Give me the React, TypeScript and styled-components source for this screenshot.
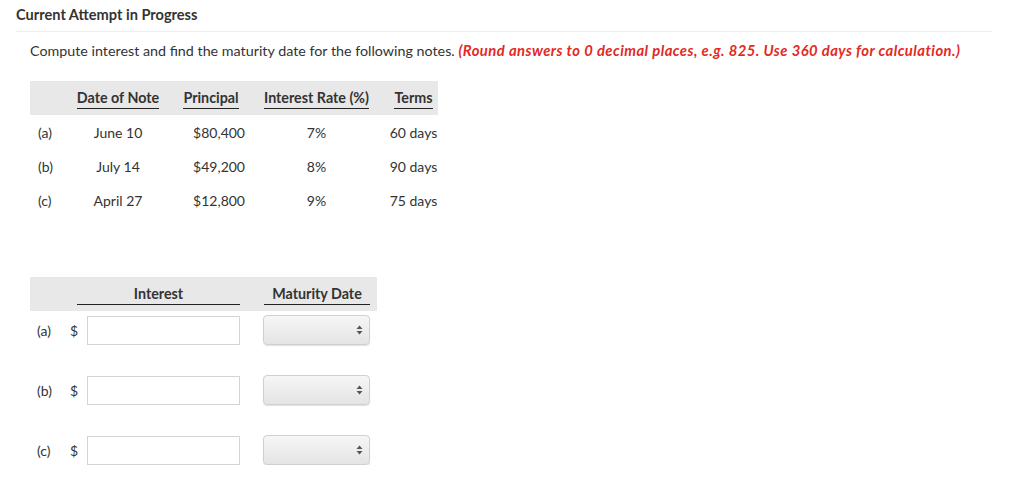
import styled, { createGlobalStyle } from "styled-components";

const GlobalStyle = createGlobalStyle`
  body {
    margin: 0;
    background: #fff;
    font-family: Lato, "Open Sans", sans-serif;
    color: #333;
  }
`;

const Page = styled.div`
  padding: 6px 32px 0 16px;
`;

const Heading = styled.h2`
  margin: 0;
  font-size: 14.6px;
  font-weight: 700;
  line-height: 18px;
  padding-bottom: 7px;
  border-bottom: 1px solid #eee;
`;

const Body = styled.div`
  padding-left: 14px;
`;

const Instruction = styled.p`
  margin: 9px 0 0;
  font-size: 14.3px;
  line-height: 18px;
`;

const Note = styled.span`
  color: #e22a22;
  font-weight: 700;
  font-style: italic;
  font-size: 14.8px;
  letter-spacing: 0.45px;
`;

const GivenTable = styled.div`
  margin-top: 21px;
  display: grid;
  grid-template-columns: 40px 96px 90px 121px 61px;
  width: 408px;
`;

const HeadCell = styled.div<{ $pad?: number }>`
  background: #e8e8e8;
  height: 34px;
  box-sizing: border-box;
  padding-bottom: 6px;
  padding-left: ${(p) => p.$pad ?? 0}px;
  display: flex;
  align-items: flex-end;
  justify-content: center;
`;

const HeadText = styled.span`
  font-size: 14.3px;
  font-weight: 700;
  line-height: 17px;
  border-bottom: 1.5px solid #222;
  padding-bottom: 2px;
`;

const Cell = styled.div<{ $align?: string; $pad?: number }>`
  height: 34px;
  display: flex;
  align-items: center;
  justify-content: ${(p) => p.$align ?? "center"};
  padding-left: ${(p) => (p.$align === "flex-start" ? p.$pad ?? 0 : 0)}px;
  padding-right: ${(p) => (p.$align === "flex-end" ? p.$pad ?? 0 : 0)}px;
  font-size: 14px;
`;

const TermCell = styled(Cell)`
  padding-left: 12px;
`;

const AnswerBlock = styled.div`
  margin-top: 60px;
  width: 347px;
`;

const AnswerHead = styled.div`
  background: #e8e8e8;
  height: 34px;
  box-sizing: border-box;
  padding: 0 0 6px 47px;
  display: flex;
  align-items: flex-end;
`;

const AnswerHeadCell = styled.div<{ $w: number; $gap?: number }>`
  width: ${(p) => p.$w}px;
  margin-left: ${(p) => p.$gap ?? 0}px;
  text-align: center;
  font-size: 14.3px;
  font-weight: 700;
  line-height: 17px;
  border-bottom: 1.5px solid #222;
  padding-bottom: 2px;
`;

const AnswerRows = styled.div`
  display: flex;
  flex-direction: column;
  gap: 30px;
  margin-top: 4px;
`;

const AnswerRow = styled.div`
  height: 30px;
  display: flex;
  align-items: center;
  padding-left: 7px;
  font-size: 14px;
`;

const RowLabel = styled.span`
  width: 33px;
`;

const Dollar = styled.span`
  width: 17px;
`;

const AmountInput = styled.input`
  width: 153px;
  height: 29px;
  box-sizing: border-box;
  border: 1px solid #d4d4d4;
  border-radius: 0;
  padding: 0 6px;
  font-family: inherit;
  font-size: 14px;
  outline: none;
`;

const DateSelect = styled.div`
  margin-left: 23px;
  width: 107px;
  height: 30px;
  box-sizing: border-box;
  border: 1px solid #d0d0d0;
  border-radius: 4px;
  background: linear-gradient(#f6f6f6, #e4e4e4);
  box-shadow: 0 1px 1px rgba(0, 0, 0, 0.12);
  display: flex;
  align-items: center;
  justify-content: flex-end;
  padding-right: 6px;
`;

const rows = [
  { id: "(a)", date: "June 10", principal: "$80,400", rate: "7%", terms: "60 days" },
  { id: "(b)", date: "July 14", principal: "$49,200", rate: "8%", terms: "90 days" },
  { id: "(c)", date: "April 27", principal: "$12,800", rate: "9%", terms: "75 days" },
];

const Arrows = () => (
  <svg width="7" height="10" viewBox="0 0 7 10">
    <path d="M3.5 0.5 L6.5 4 L0.5 4 Z" fill="#555" />
    <path d="M3.5 9.5 L6.5 6 L0.5 6 Z" fill="#555" />
  </svg>
);

const App = () => {
  return (
    <Page>
      <GlobalStyle />
      <Heading>Current Attempt in Progress</Heading>
      <Body>
        <Instruction>
          Compute interest and find the maturity date for the following notes.{" "}
          <Note>
            (Round answers to 0 decimal places, e.g. 825. Use 360 days for
            calculation.)
          </Note>
        </Instruction>

        <GivenTable>
          <HeadCell />
          <HeadCell>
            <HeadText>Date of Note</HeadText>
          </HeadCell>
          <HeadCell>
            <HeadText>Principal</HeadText>
          </HeadCell>
          <HeadCell>
            <HeadText>Interest Rate (%)</HeadText>
          </HeadCell>
          <HeadCell $pad={12}>
            <HeadText>Terms</HeadText>
          </HeadCell>
          {rows.map((r) => (
            <>
              <Cell key={r.id + "l"} $align="flex-start" $pad={8}>
                {r.id}
              </Cell>
              <Cell key={r.id + "d"}>{r.date}</Cell>
              <Cell key={r.id + "p"} $align="flex-end" $pad={11}>
                {r.principal}
              </Cell>
              <Cell key={r.id + "r"}>{r.rate}</Cell>
              <TermCell key={r.id + "t"}>{r.terms}</TermCell>
            </>
          ))}
        </GivenTable>

        <AnswerBlock>
          <AnswerHead>
            <AnswerHeadCell $w={163}>Interest</AnswerHeadCell>
            <AnswerHeadCell $w={106} $gap={24}>
              Maturity Date
            </AnswerHeadCell>
          </AnswerHead>
          <AnswerRows>
            {rows.map((r) => (
              <AnswerRow key={r.id}>
                <RowLabel>{r.id}</RowLabel>
                <Dollar>$</Dollar>
                <AmountInput type="text" />
                <DateSelect>
                  <Arrows />
                </DateSelect>
              </AnswerRow>
            ))}
          </AnswerRows>
        </AnswerBlock>
      </Body>
    </Page>
  );
};

export default App;
